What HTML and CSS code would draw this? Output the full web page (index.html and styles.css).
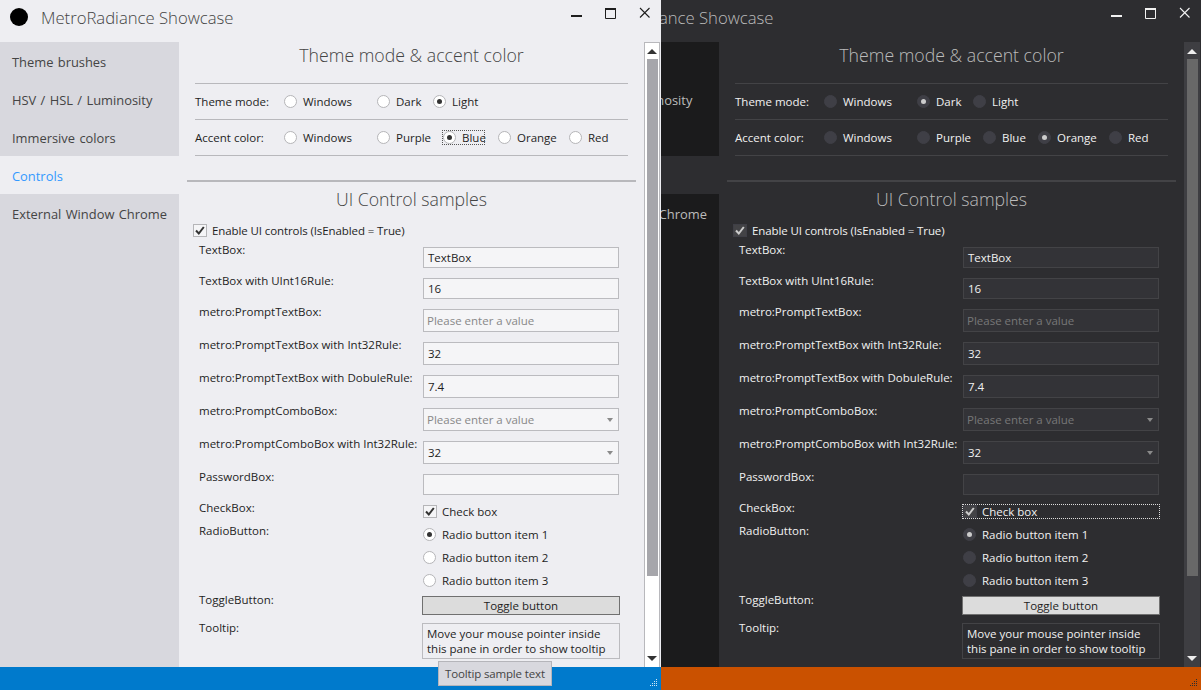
FILE: index.html
```html
<!DOCTYPE html>
<html lang="en">

<head>
  <meta charset="UTF-8">
  <title>MetroRadiance Showcase</title>
  <link rel="stylesheet" href="styles.css">
</head>

<body>
  <div class="desktop">

    <div class="window dark">
      <header class="titlebar">
        <span class="app-icon"></span>
        <span class="app-title">MetroRadiance Showcase</span>
        <div class="caption">
          <svg width="34" height="26" viewBox="0 0 34 26"><rect x="12" y="15" width="11" height="2" fill="currentColor"/></svg>
          <svg width="34" height="26" viewBox="0 0 34 26"><path d="M12.500 8.500h10v10h-10z" fill="none" stroke="currentColor"/><rect x="12" y="8" width="11" height="2" fill="currentColor"/></svg>
          <svg width="34" height="26" viewBox="0 0 34 26"><path d="M13 8l9.500 9.500M22.500 8L13 17.500" fill="none" stroke="currentColor" stroke-width="1.100"/></svg>
        </div>
      </header>
      <div class="body">
        <nav class="sidebar">
          <a>Theme brushes</a>
          <a>HSV / HSL / Luminosity</a>
          <a>Immersive colors</a>
          <a class="active">Controls</a>
          <a>External Window Chrome</a>
        </nav>
        <main class="content">
          <section class="theme">
            <h2>Theme mode &amp; accent color</h2>
            <div class="option-row mode-row">
              <label class="row-label">Theme mode:</label>
              <span class="radio"><i></i>Windows</span>
              <span class="radio on"><i></i>Dark</span>
              <span class="radio"><i></i>Light</span>
            </div>
            <div class="option-row accent-row">
              <label class="row-label">Accent color:</label>
              <span class="radio"><i></i>Windows</span>
              <span class="radio"><i></i>Purple</span>
              <span class="radio"><i></i>Blue</span>
              <span class="radio on"><i></i>Orange</span>
              <span class="radio"><i></i>Red</span>
            </div>
          </section>
          <section class="samples">
            <h2>UI Control samples</h2>
            <div class="check enable"><i><svg width="14" height="13" viewBox="0 0 14 13"><path d="M3 6.500l2.800 3 5-6.500" fill="none" stroke="currentColor" stroke-width="2"/></svg></i>Enable UI controls (IsEnabled = True)</div>
            <div class="form-grid">
              <label>TextBox:</label>
              <div class="field short">TextBox</div>
              <label>TextBox with UInt16Rule:</label>
              <div class="field short">16</div>
              <label>metro:PromptTextBox:</label>
              <div class="field prompt">Please enter a value</div>
              <label>metro:PromptTextBox with Int32Rule:</label>
              <div class="field">32</div>
              <label>metro:PromptTextBox with DobuleRule:</label>
              <div class="field">7.4</div>
              <label>metro:PromptComboBox:</label>
              <div class="field combo prompt">Please enter a value</div>
              <label>metro:PromptComboBox with Int32Rule:</label>
              <div class="field combo">32</div>
              <label>PasswordBox:</label>
              <div class="field short"></div>
              <label>CheckBox:</label>
              <div class="check focused"><i><svg width="14" height="13" viewBox="0 0 14 13"><path d="M3 6.500l2.800 3 5-6.500" fill="none" stroke="currentColor" stroke-width="2"/></svg></i>Check box</div>
              <label>RadioButton:</label>
              <div class="radio-list">
                <span class="radio on"><i></i>Radio button item 1</span>
                <span class="radio"><i></i>Radio button item 2</span>
                <span class="radio"><i></i>Radio button item 3</span>
              </div>
              <label class="low">ToggleButton:</label>
              <button class="toggle">Toggle button</button>
              <label>Tooltip:</label>
              <div class="tip-pane">Move your mouse pointer inside this pane in order to show tooltip</div>
            </div>
          </section>
        </main>
        <div class="scrollbar">
          <span class="arrow up"></span>
          <span class="thumb"></span>
          <span class="arrow down"></span>
        </div>
      </div>
      <footer class="statusbar">
        <svg class="grip" width="8" height="8" viewBox="0 0 8 8"><path d="M6 0h1v1h-1z M4 2h1v1h-1z M6 2h1v1h-1z M2 4h1v1h-1z M4 4h1v1h-1z M6 4h1v1h-1z M0 6h1v1h-1z M2 6h1v1h-1z M4 6h1v1h-1z M6 6h1v1h-1z" fill="currentColor"/></svg>
      </footer>
    </div>

    <div class="window light">
      <header class="titlebar">
        <span class="app-icon"></span>
        <span class="app-title">MetroRadiance Showcase</span>
        <div class="caption">
          <svg width="34" height="26" viewBox="0 0 34 26"><rect x="12" y="15" width="11" height="2" fill="currentColor"/></svg>
          <svg width="34" height="26" viewBox="0 0 34 26"><path d="M12.500 8.500h10v10h-10z" fill="none" stroke="currentColor"/><rect x="12" y="8" width="11" height="2" fill="currentColor"/></svg>
          <svg width="34" height="26" viewBox="0 0 34 26"><path d="M13 8l9.500 9.500M22.500 8L13 17.500" fill="none" stroke="currentColor" stroke-width="1.100"/></svg>
        </div>
      </header>
      <div class="body">
        <nav class="sidebar">
          <a>Theme brushes</a>
          <a>HSV / HSL / Luminosity</a>
          <a>Immersive colors</a>
          <a class="active">Controls</a>
          <a>External Window Chrome</a>
        </nav>
        <main class="content">
          <section class="theme">
            <h2>Theme mode &amp; accent color</h2>
            <div class="option-row mode-row">
              <label class="row-label">Theme mode:</label>
              <span class="radio"><i></i>Windows</span>
              <span class="radio"><i></i>Dark</span>
              <span class="radio on"><i></i>Light</span>
            </div>
            <div class="option-row accent-row">
              <label class="row-label">Accent color:</label>
              <span class="radio"><i></i>Windows</span>
              <span class="radio"><i></i>Purple</span>
              <span class="radio on focused"><i></i>Blue</span>
              <span class="radio"><i></i>Orange</span>
              <span class="radio"><i></i>Red</span>
            </div>
          </section>
          <section class="samples">
            <h2>UI Control samples</h2>
            <div class="check enable"><i><svg width="14" height="13" viewBox="0 0 14 13"><path d="M3 6.500l2.800 3 5-6.500" fill="none" stroke="currentColor" stroke-width="2"/></svg></i>Enable UI controls (IsEnabled = True)</div>
            <div class="form-grid">
              <label>TextBox:</label>
              <div class="field short">TextBox</div>
              <label>TextBox with UInt16Rule:</label>
              <div class="field short">16</div>
              <label>metro:PromptTextBox:</label>
              <div class="field prompt">Please enter a value</div>
              <label>metro:PromptTextBox with Int32Rule:</label>
              <div class="field">32</div>
              <label>metro:PromptTextBox with DobuleRule:</label>
              <div class="field">7.4</div>
              <label>metro:PromptComboBox:</label>
              <div class="field combo prompt">Please enter a value</div>
              <label>metro:PromptComboBox with Int32Rule:</label>
              <div class="field combo">32</div>
              <label>PasswordBox:</label>
              <div class="field short"></div>
              <label>CheckBox:</label>
              <div class="check"><i><svg width="14" height="13" viewBox="0 0 14 13"><path d="M3 6.500l2.800 3 5-6.500" fill="none" stroke="currentColor" stroke-width="2"/></svg></i>Check box</div>
              <label>RadioButton:</label>
              <div class="radio-list">
                <span class="radio on"><i></i>Radio button item 1</span>
                <span class="radio"><i></i>Radio button item 2</span>
                <span class="radio"><i></i>Radio button item 3</span>
              </div>
              <label class="low">ToggleButton:</label>
              <button class="toggle">Toggle button</button>
              <label>Tooltip:</label>
              <div class="tip-pane">Move your mouse pointer inside this pane in order to show tooltip</div>
            </div>
          </section>
        </main>
        <div class="scrollbar">
          <span class="arrow up"></span>
          <span class="thumb"></span>
          <span class="arrow down"></span>
        </div>
      </div>
      <footer class="statusbar">
        <svg class="grip" width="8" height="8" viewBox="0 0 8 8"><path d="M6 0h1v1h-1z M4 2h1v1h-1z M6 2h1v1h-1z M2 4h1v1h-1z M4 4h1v1h-1z M6 4h1v1h-1z M0 6h1v1h-1z M2 6h1v1h-1z M4 6h1v1h-1z M6 6h1v1h-1z" fill="currentColor"/></svg>
      </footer>
      <div class="tooltip">Tooltip sample text</div>
    </div>

  </div>
</body>

</html>
```

FILE: styles.css
```css
:root {
  font-family: "Open Sans", "Noto Sans", sans-serif;
  font-size: 11.5px;
}

body {
  margin: 0;
  padding: 0;
  background-color: #2d2d30;
}

.desktop {
  position: relative;
  width: 1201px;
  height: 690px;
  overflow: hidden;
}

/* the two windows sit on the desktop, the light one on top */
.window {
  position: absolute;
  top: 0;
  width: 661px;
  height: 690px;
  display: flex;
  flex-direction: column;
  background-color: var(--bg);
  color: var(--text);
}

.window.light {
  left: 0;
  --bg: #eeeef2;
  --text: #1e1e1e;
  --muted: #444;
  --side: #d8d8de;
  --line: #b8b8bc;
  --field: #f5f5f7;
  --field-line: #bbbbbf;
  --prompt: #888;
  --radio: #fff;
  --radio-line: #b5b5b8;
  --dot: #333;
  --check: #f5f5f7;
  --track: #fff;
  --track-line: #b8b8bc;
  --thumb: #a6a6ab;
  --arrow: #333;
  --accent: #3399ff;
  --status: #007acc;
  --grip: #cfe6f5;
  --focus: #555;
}

.window.dark {
  left: 540px;
  --bg: #2d2d30;
  --text: #f1f1f1;
  --muted: #bbb;
  --side: #1b1b1c;
  --line: #434346;
  --field: #333337;
  --field-line: #434346;
  --prompt: #777;
  --radio: #3f3f46;
  --radio-line: #3f3f46;
  --dot: #ccc;
  --check: #434346;
  --track: #3e3e42;
  --track-line: #3e3e42;
  --thumb: #686868;
  --arrow: #eee;
  --accent: #3399ff;
  --status: #ca5100;
  --grip: #2d2d30;
  --focus: #ddd;
}

.titlebar {
  height: 42px;
  flex: none;
  display: flex;
  align-items: flex-start;
}

.app-icon {
  width: 18px;
  height: 18px;
  margin: 8px 0 0 10px;
  border-radius: 50%;
  background-color: #000;
}

.app-title {
  margin: 5px 0 0 13px;
  font-size: 16.7px;
  line-height: 26px;
  font-weight: 300;
  color: var(--muted);
}

.caption {
  margin-left: auto;
  display: flex;
  color: var(--text);
}

.caption svg {
  display: block;
  overflow: visible;
}

.body {
  flex: 1;
  min-height: 0;
  display: flex;
}

.sidebar {
  width: 179px;
  flex: none;
  background-color: var(--side);
}

.sidebar a {
  display: block;
  height: 38px;
  padding: 1px 0 0 12px;
  box-sizing: border-box;
  line-height: 38px;
  font-size: 12.9px;
  word-spacing: 1px;
  color: var(--muted);
}

.sidebar a.active {
  background-color: var(--bg);
  color: var(--accent);
}

.content {
  flex: 1;
  min-width: 0;
  padding-left: 8px;
  overflow: hidden;
}

h2 {
  margin: 0;
  text-align: center;
  font-size: 17.7px;
  font-weight: 300;
  color: var(--muted);
}

.theme {
  width: 433px;
  padding: 0 8px;
  border-bottom: 2px solid var(--line);
  height: 138px;
}

.theme h2 {
  height: 41px;
  line-height: 27px;
}

.option-row {
  height: 36px;
  box-sizing: border-box;
  border-top: 1px solid var(--line);
  display: grid;
  align-items: center;
}

.option-row:last-child {
  height: 37px;
  border-bottom: 1px solid var(--line);
}

.mode-row {
  grid-template-columns: 89px 93px 56px auto;
}

.accent-row {
  grid-template-columns: 89px 93px 66px 55px 71px auto;
}

.radio {
  display: flex;
  align-items: center;
  height: 13px;
  line-height: 13px;
}

.radio i {
  width: 13px;
  height: 13px;
  margin-right: 6px;
  flex: none;
  box-sizing: border-box;
  border: 1px solid var(--radio-line);
  border-radius: 50%;
  background-color: var(--radio);
  display: flex;
  align-items: center;
  justify-content: center;
}

.radio.on i::after {
  content: "";
  width: 5px;
  height: 5px;
  border-radius: 50%;
  background-color: var(--dot);
}

.focused {
  position: relative;
}

/* dotted focus rectangle */
.focused::before {
  content: "";
  position: absolute;
  inset: -1px;
  border: 1px dotted var(--focus);
  pointer-events: none;
}

.radio.focused {
  width: 41px;
}

.samples {
  width: 449px;
}

.samples h2 {
  height: 36px;
  line-height: 35px;
}

.check {
  display: flex;
  align-items: center;
  height: 13px;
  line-height: 13px;
}

.check i {
  width: 14px;
  height: 13px;
  margin-right: 5px;
  flex: none;
  box-sizing: border-box;
  border: 1px solid var(--radio-line);
  background-color: var(--check);
  color: var(--dot);
}

.check i svg {
  display: block;
  margin: -1px;
}

.enable {
  margin: 6px 0 10px 6px;
  letter-spacing: -0.1px;
}

.form-grid {
  display: grid;
  grid-template-columns: 224px 196px;
  row-gap: 10px;
  padding-left: 12px;
}

.form-grid label {
  margin-top: -5px;
  line-height: 16px;
  white-space: nowrap;
}

.form-grid label.low {
  margin-top: -4px;
}

.field {
  height: 23px;
  box-sizing: border-box;
  padding-left: 4px;
  line-height: 21px;
  border: 1px solid var(--field-line);
  background-color: var(--field);
  position: relative;
}

.field.short {
  height: 21px;
  line-height: 19px;
}

.field.prompt {
  padding-left: 3px;
  line-height: 22px;
  color: var(--prompt);
}

.combo::after {
  content: "";
  position: absolute;
  right: 5px;
  top: 9px;
  border-left: 3.5px solid transparent;
  border-right: 3.5px solid transparent;
  border-top: 4px solid #8a8a8a;
}

.radio-list {
  display: flex;
  flex-direction: column;
  gap: 7px;
  margin: -2px 0 -2px;
}

.radio-list .radio {
  height: 16px;
}

.toggle {
  margin: 0 -1px;
  width: 198px;
  height: 19px;
  padding: 0;
  font: inherit;
  line-height: 15px;
  color: #1e1e1e;
  background-color: #dcdcdc;
  border: 1px solid #707070;
}

.tip-pane {
  margin: -2px -1px 0;
  width: 198px;
  height: 36px;
  padding: 2px 4px;
  box-sizing: border-box;
  border: 1px solid var(--field-line);
  line-height: 15px;
}

.scrollbar {
  width: 16px;
  margin-right: 1px;
  flex: none;
  box-sizing: border-box;
  border: 1px solid var(--track-line);
  border-bottom: 0;
  background-color: var(--track);
  display: flex;
  flex-direction: column;
  align-items: center;
  padding-top: 6px;
}

.thumb {
  width: 11px;
  height: 517px;
  margin-top: 5px;
  background-color: var(--thumb);
}

.arrow {
  width: 0;
  height: 0;
  border-left: 5px solid transparent;
  border-right: 5px solid transparent;
}

.arrow.up {
  border-bottom: 5px solid var(--arrow);
}

.arrow.down {
  margin-top: auto;
  margin-bottom: 6px;
  border-top: 5px solid var(--arrow);
}

.statusbar {
  height: 23px;
  flex: none;
  display: flex;
  justify-content: flex-end;
  align-items: flex-end;
  background-color: var(--status);
}

.grip {
  display: block;
  margin: 0 3px 3px 0;
  color: var(--grip);
}

/* hovering over the status bar, as the tooltip does in the screenshot */
.tooltip {
  position: absolute;
  left: 438px;
  top: 661px;
  width: 114px;
  height: 25px;
  box-sizing: border-box;
  padding-left: 6px;
  line-height: 23px;
  white-space: nowrap;
  letter-spacing: -0.15px;
  background-color: #d8d8de;
  border: 1px solid #b5b5ba;
  color: #444;
}
```
